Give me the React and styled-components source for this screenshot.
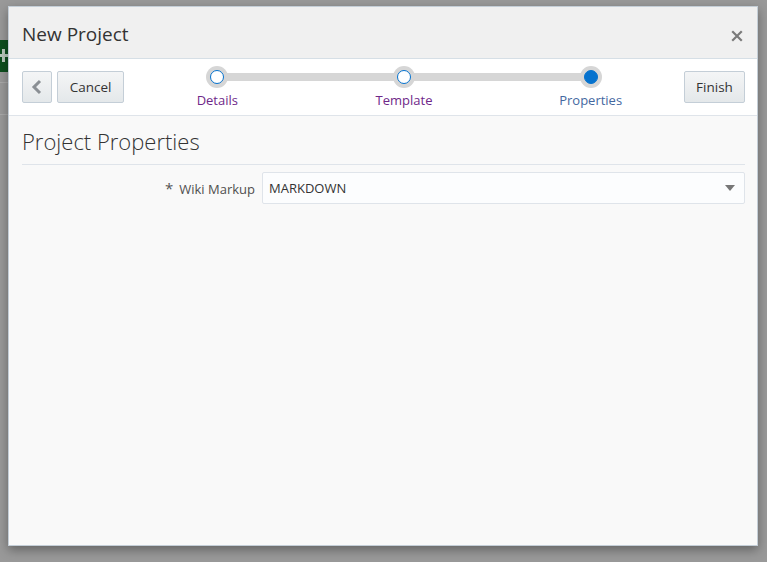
import React from 'react';
import styled, { createGlobalStyle } from 'styled-components';

const GlobalStyle = createGlobalStyle`
  html, body {
    margin: 0;
    padding: 0;
    height: 100%;
    background: #999999;
    font-family: "Open Sans", "Noto Sans", sans-serif;
    overflow: hidden;
  }
  #root {
    height: 100%;
  }
`;

const PageS = styled.div`
  position: relative;
  width: 767px;
  height: 562px;
  background: #999999;
`;

const BehindS = styled.div`
  padding-top: 40px;
`;

const GreenTabS = styled.div`
  position: relative;
  width: 8px;
  height: 32px;
  background: #0d4f1f;
  overflow: hidden;

  &::before {
    content: '';
    position: absolute;
    left: 0;
    top: 14px;
    width: 8px;
    height: 3px;
    background: #b9c9bd;
  }

  &::after {
    content: '';
    position: absolute;
    left: 2px;
    top: 9px;
    width: 3px;
    height: 13px;
    background: #b9c9bd;
  }
`;

const BehindLineS = styled.div`
  height: 1px;
  width: 8px;
  background: #a9a9a9;
  margin-top: ${(p) => p.gap}px;
`;

const DialogS = styled.div`
  position: absolute;
  left: 8px;
  top: 6px;
  width: 748px;
  height: 538px;
  border: 1px solid #c4ced7;
  background: #f9f9f9;
  box-shadow: 0 4px 10px rgba(0, 0, 0, 0.35);
  display: flex;
  flex-direction: column;
`;

const HeaderS = styled.div`
  height: 51px;
  flex: none;
  background: #f0f0f0;
  border-bottom: 1px solid #d6dfe6;
  display: flex;
  align-items: center;
  justify-content: space-between;
  padding: 0 14px 0 13px;
`;

const TitleS = styled.div`
  font-size: 19px;
  color: #333333;
  margin-top: 2px;
`;

const CloseS = styled.div`
  width: 12px;
  height: 12px;
  display: flex;
  margin-top: 6px;
`;

const TrainBarS = styled.div`
  height: 56px;
  flex: none;
  background: #ffffff;
  border-bottom: 1px solid #dfe4ea;
  display: flex;
  align-items: center;
  padding: 0 12px 0 13px;
`;

const ButtonS = styled.button`
  height: 32px;
  width: ${(p) => p.w}px;
  margin-left: ${(p) => p.ml || 0}px;
  border: 1px solid #c4ced7;
  border-radius: 2px;
  background: linear-gradient(#f4f5f6, #e4e8ea);
  font-family: inherit;
  font-size: 13.5px;
  color: #333333;
  padding: 0;
  display: flex;
  align-items: center;
  justify-content: center;
  margin-top: -1px;
`;

const TrainS = styled.div`
  flex: 1;
  display: grid;
  grid-template-columns: 1fr 1fr 1fr;
  position: relative;
  align-self: stretch;
`;

const TrainLineS = styled.div`
  position: absolute;
  left: 16.67%;
  right: 16.67%;
  top: 14px;
  height: 8px;
  background: #d6d6d6;
`;

const StepS = styled.div`
  position: relative;
  display: flex;
  flex-direction: column;
  align-items: center;
  padding-top: 7px;
`;

const RingS = styled.div`
  width: 22px;
  height: 22px;
  border-radius: 50%;
  background: #d6d6d6;
  display: flex;
  align-items: center;
  justify-content: center;
`;

const DotS = styled.div`
  width: 12px;
  height: 12px;
  border-radius: 50%;
  border: 1px solid #0572ce;
  background: ${(p) => (p.current ? '#0572ce' : '#ffffff')};
`;

const StepLabelS = styled.div`
  margin-top: 3px;
  font-size: 13px;
  color: ${(p) => (p.current ? '#44689f' : '#6f2889')};
`;

const ContentS = styled.div`
  flex: 1;
  padding: 10px 12px 0 13px;
`;

const SectionTitleS = styled.div`
  font-size: 22px;
  font-weight: 300;
  color: #333333;
  padding-bottom: 8px;
  border-bottom: 1px solid #dfe4ea;
`;

const FormRowS = styled.div`
  display: grid;
  grid-template-columns: 233px 1fr;
  gap: 7px;
  margin-top: 7px;
  align-items: center;
`;

const LabelS = styled.div`
  text-align: right;
  font-size: 13px;
  color: #4f4f4f;
`;

const StarS = styled.span`
  font-size: 15px;
  color: #555555;
  margin-right: 6px;
`;

const SelectS = styled.div`
  height: 30px;
  border: 1px solid #dfe4ea;
  border-radius: 2px;
  background: #fcfdfe;
  display: flex;
  align-items: center;
  justify-content: space-between;
  padding: 0 9px 0 6px;
  font-size: 13px;
  color: #333333;
`;

const ArrowS = styled.div`
  width: 0;
  height: 0;
  border-left: 5px solid transparent;
  border-right: 5px solid transparent;
  border-top: 6px solid #777777;
`;

const steps = [
  { label: 'Details' },
  { label: 'Template' },
  { label: 'Properties', current: true },
];

const App = () => {
  return (
    <PageS>
      <GlobalStyle />
      <BehindS>
        <GreenTabS />
        <BehindLineS gap={10} />
        <BehindLineS gap={31} />
      </BehindS>
      <DialogS>
        <HeaderS>
          <TitleS>New Project</TitleS>
          <CloseS>
            <svg width="12" height="12" viewBox="0 0 12 12">
              <path
                d="M2 2 L10 10 M10 2 L2 10"
                stroke="#7a7a7a"
                strokeWidth="2.2"
                strokeLinecap="square"
              />
            </svg>
          </CloseS>
        </HeaderS>
        <TrainBarS>
          <ButtonS w={30}>
            <svg width="12" height="16" viewBox="0 0 12 16">
              <path
                d="M9 2 L3 8 L9 14"
                stroke="#8a8f94"
                strokeWidth="3"
                fill="none"
              />
            </svg>
          </ButtonS>
          <ButtonS w={67} ml={5}>
            Cancel
          </ButtonS>
          <TrainS>
            <TrainLineS />
            {steps.map((s) => (
              <StepS key={s.label}>
                <RingS>
                  <DotS current={s.current} />
                </RingS>
                <StepLabelS current={s.current}>{s.label}</StepLabelS>
              </StepS>
            ))}
          </TrainS>
          <ButtonS w={61}>Finish</ButtonS>
        </TrainBarS>
        <ContentS>
          <SectionTitleS>Project Properties</SectionTitleS>
          <FormRowS>
            <LabelS>
              <StarS>*</StarS>Wiki Markup
            </LabelS>
            <SelectS>
              MARKDOWN
              <ArrowS />
            </SelectS>
          </FormRowS>
        </ContentS>
      </DialogS>
    </PageS>
  );
};

export default App;
